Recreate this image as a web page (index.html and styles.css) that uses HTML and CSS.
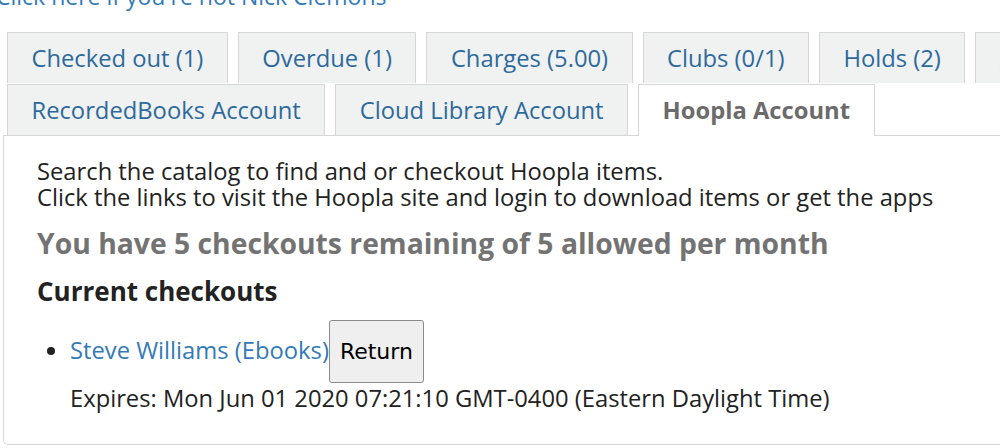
FILE: index.html
```html
<!DOCTYPE html>
<html lang="en">
<head>
<meta charset="utf-8">
<title>Hoopla Account</title>
<link rel="stylesheet" href="styles.css">
</head>
<body>
<div class="page">
  <p class="notyou"><a href="#">Click here if you're not Nick Clemons</a></p>
  <div class="tabs">
    <ul class="tablist">
      <li class="tab"><a href="#">Checked out (1)</a></li>
      <li class="tab"><a href="#">Overdue (1)</a></li>
      <li class="tab"><a href="#">Charges (5.00)</a></li>
      <li class="tab"><a href="#">Clubs (0/1)</a></li>
      <li class="tab"><a href="#">Holds (2)</a></li>
      <li class="tab"><a href="#">Article requests (0)</a></li>
      <li class="tab"><a href="#">RecordedBooks Account</a></li>
      <li class="tab"><a href="#">Cloud Library Account</a></li>
      <li class="tab active"><a href="#">Hoopla Account</a></li>
    </ul>
    <div class="panel">
      <p class="intro">Search the catalog to find and or checkout Hoopla items.<br>Click the links to visit the Hoopla site and login to download items or get the apps</p>
      <h3 class="remaining">You have 5 checkouts remaining of 5 allowed per month</h3>
      <h4 class="current">Current checkouts</h4>
      <ul class="checkouts">
        <li>
          <a href="#">Steve Williams (Ebooks)</a><button class="return" type="button">Return</button>
          <div class="expires">Expires: Mon Jun 01 2020 07:21:10 GMT-0400 (Eastern Daylight Time)</div>
        </li>
      </ul>
    </div>
  </div>
</div>
</body>
</html>
```
FILE: styles.css
```css
html, body {
  margin: 0;
  padding: 0;
  overflow: hidden;
  background: #fff;
}
body {
  font-family: "Open Sans", "Noto Sans", sans-serif;
  font-size: 23.75px;
  color: #222;
}
.page {
  width: 1280px;
  padding: 0 0 0 3px;
}
a {
  color: #337ab7;
  text-decoration: none;
}
.notyou {
  margin: -17px 0 0 -7px;
  font-size: 23px;
  line-height: 26px;
  white-space: nowrap;
}
.tabs {
  margin-top: 23px;
}
.tablist {
  list-style: none;
  margin: 0;
  padding: 0 0 0 4px;
  display: flex;
  flex-wrap: wrap;
  column-gap: 10px;
  row-gap: 1px;
  position: relative;
  z-index: 1;
}
.tab {
  border: 1px solid #d6d6d6;
  border-bottom: 0;
  background: #f0f1f1;
}
.tab a {
  display: block;
  padding: 0 23.5px;
  line-height: 50px;
  color: #2d6a9c;
  white-space: nowrap;
}
.tab.active {
  background: #fff;
  margin-bottom: -1px;
}
.tab.active a {
  color: #6b6b6b;
  font-weight: bold;
  line-height: 51px;
}
.panel {
  border: 1px solid #d6d6d6;
  border-radius: 0 0 5px 5px;
  padding: 22px 33px 31px;
}
.intro {
  margin: 0;
  line-height: 26px;
}
.remaining {
  margin: 16px 0 0;
  font-size: 28.3px;
  font-weight: bold;
  color: #737373;
  line-height: 34px;
}
.current {
  margin: 15px 0 0;
  font-size: 26px;
  font-weight: bold;
  color: #222;
  line-height: 32px;
}
.checkouts {
  margin: 13px 0 0;
  padding-left: 33px;
  line-height: 34px;
}
.checkouts a {
  color: #337ab7;
}
.return {
  font-family: "DejaVu Sans", sans-serif;
  font-size: 22px;
  color: #000;
  background: #efefef;
  border: 1px solid #8a8a8a;
  border-radius: 3px;
  padding: 18px 10px;
  margin: 0;
  vertical-align: baseline;
}
.expires {
  line-height: 30px;
}
```
